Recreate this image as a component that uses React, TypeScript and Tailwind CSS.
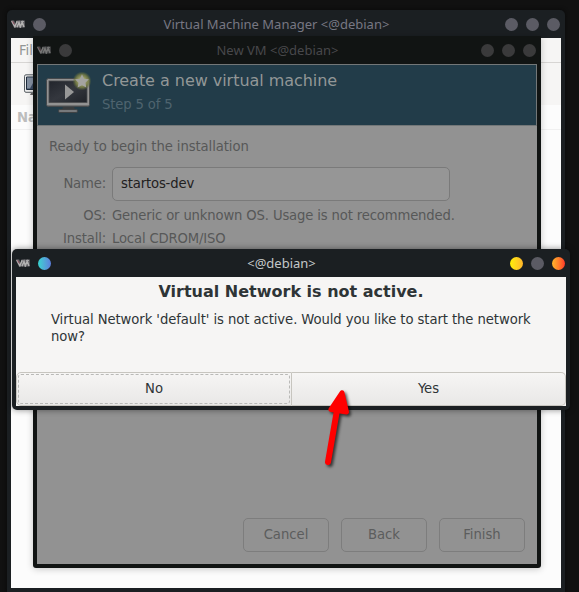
import type { ReactNode } from 'react';

const ui = "font-['DejaVu_Sans_Condensed','DejaVu_Sans',sans-serif] [font-stretch:condensed]";

function Logo({ dim = false }: { dim?: boolean }) {
  return (
    <svg width="14" height="8" viewBox="0 0 14 8" className={dim ? 'opacity-50' : 'opacity-80'}>
      <path d="M0 .5h3.2l1.2 3.8L5.5.5h8.3v7H3L0 1.6z" fill="#77757a" />
      <path d="M.8 1L3.9 6.8 6.1 1.3M6 7.3L8 2.4l1.3 4.4 1.9-4.6L13 6.9" fill="none" stroke="#dad8d7" strokeWidth="1.4" />
      <path d="M1.6 1.4l1.8 3" stroke="#a9485e" strokeWidth=".9" />
      <path d="M6.4 2.2h1M10 1.4h3M8.6 7h1.6" stroke="#cfcfcf" />
    </svg>
  );
}

function TitleBar({ title, dots, left, text, dim }: { title: string; dots: string[]; left: string; text: string; dim?: boolean }) {
  return (
    <div className="relative flex h-7 items-center">
      <Logo dim={dim} />
      <i className={`ml-[8px] size-[13px] rounded-full ${left}`} />
      <span className={`absolute left-0 right-[18px] top-[5px] text-center font-['Noto_Sans',sans-serif] text-[13px] leading-[18px] ${text}`}>{title}</span>
      <div className="ml-auto flex gap-2">
        {dots.map((d, i) => (
          <i key={i} className={`size-[13px] rounded-full ${d}`} />
        ))}
      </div>
    </div>
  );
}

function Monitor() {
  return (
    <svg width="46" height="43" viewBox="0 0 46 43" className="shrink-0">
      <defs>
        <linearGradient id="screen" x1="0" y1="0" x2="1" y2="1">
          <stop stopColor="#22252c" />
          <stop offset=".5" stopColor="#34373e" />
          <stop offset="1" stopColor="#202329" />
        </linearGradient>
        <radialGradient id="glow">
          <stop offset=".35" stopColor="#a0a46b" />
          <stop offset=".7" stopColor="#747b45" stopOpacity=".85" />
          <stop offset="1" stopColor="#5d6c3d" stopOpacity="0" />
        </radialGradient>
      </defs>
      <path d="M17 35h11l1 4H16z" fill="#393c3e" />
      <rect x="12.5" y="38.5" width="19" height="3" rx="1.3" fill="#77797b" stroke="#3f4244" />
      <rect x=".5" y="7.5" width="43" height="28" rx="2" fill="#929292" stroke="#45494c" />
      <rect x="3" y="10" width="38" height="21.5" fill="url(#screen)" stroke="#4a4b4e" strokeWidth=".8" />
      <path d="M2 34.5h40" stroke="#717171" />
      <path d="M19 13.5v15l9-7.5z" fill="#989898" />
      <circle cx="36" cy="10" r="9.5" fill="url(#glow)" />
      <path d="M36 3.3l2.1 4.4 4.8.6-3.5 3.4.9 4.9-4.3-2.4-4.4 2.4.9-4.9L29 8.3l4.9-.6z" fill="#a4a4a0" />
    </svg>
  );
}

function Field({ label, children, className, labelClass = '' }: { label: string; children: ReactNode; className: string; labelClass?: string }) {
  return (
    <div className={`flex items-center tracking-[-0.145px] ${className}`}>
      <span className={`w-[69px] text-right ${labelClass}`}>{label}</span>
      {children}
    </div>
  );
}

function Arrow() {
  return (
    <svg width="40" height="90" viewBox="0 0 40 90" className="absolute left-[319px] top-[384px]">
      <g style={{ filter: 'drop-shadow(2px 2px 1.5px rgba(0,0,0,.65))' }} stroke="#f00" strokeLinecap="round" strokeLinejoin="round">
        <path d="M9 78L17.5 29" strokeWidth="6" />
        <path d="M23 8.8L12 25.5 27.5 28z" fill="#f00" strokeWidth="5" />
      </g>
    </svg>
  );
}

export default function App() {
  const grey = 'bg-[#5b5b64]';
  const dim = 'bg-[#3a3a3b]';
  return (
    <main className={`relative h-[592px] w-[579px] overflow-hidden bg-[#111] text-[14.67px] leading-[17px] ${ui}`}>
      <section className="absolute left-[7px] top-[10px] h-[582px] w-[558px] rounded-t-[5px] bg-[#1b1f22] px-1 shadow-[0_0_4px_#080808]">
        <div className="pr-[1px]"><TitleBar title="Virtual Machine Manager <@debian>" left={grey} dots={[grey, grey, grey]} text="text-[#777783]" /></div>
        <div className="h-[550px] bg-[#fcfcfc]">
          <div className="h-[25px] border-b border-[#d7d5d3] bg-[#f6f5f4] pl-2 pt-[3px] text-[#929595]">File</div>
          <div className="h-[42px] bg-[#f6f5f4] pl-3 pt-[11px]">
            <svg width="24" height="23" viewBox="0 0 24 23">
              <rect x="1.5" y=".8" width="26" height="17.5" rx="1.5" fill="#eee" stroke="#555b60" />
              <path d="M3.5 3h24v12.5h-24z" fill="#3a4a62" stroke="#202c3c" />
              <path d="M4 3.5h9L7 14.5H4z" fill="#8591a2" />
              <path d="M8 19h17v2H7z" fill="#666" />
            </svg>
          </div>
          <div className="h-[25px] border-b border-[#f0f0f0] pl-[6px] pt-[3px] font-bold text-[#bdbdbd]">Name</div>
        </div>
      </section>

      <section className="absolute left-[33px] top-[36px] h-[532px] w-[508px] rounded-b-[3px] bg-[#111413] px-1 shadow-[0_1px_7px_rgba(0,0,0,.22)]">
        <div className="pr-[1px]"><TitleBar title="New VM <@debian>" left={dim} dots={[dim, dim, dim]} text="text-[#48484b]" dim /></div>
        <div className="flex h-[500px] flex-col bg-[#929292]">
          <header className="flex h-[62px] border border-[#737778] bg-[#223c49] pl-[8px] pt-[6px] font-['DejaVu_Sans',sans-serif] [font-stretch:normal]">
            <Monitor />
            <div className="ml-[10px]">
              <h1 className="text-[16px] leading-[19px] tracking-[-0.04px] text-[#929797]">Create a new virtual machine</h1>
              <p className={`mt-[5px] tracking-[-0.14px] text-[#4f646f] ${ui}`}>Step 5 of 5</p>
            </div>
          </header>
          <div className="text-[#575858]">
            <p className="ml-3 mt-[11px] tracking-[-0.08px]">Ready to begin the installation</p>
            <Field label="Name:" className="mt-[13px] h-[34px]" labelClass="pb-[3px]">
              <div className="ml-[6px] flex h-[34px] w-[338px] items-center rounded-[5px] border border-[#7a7a7a] bg-[#969696] pl-2 pb-[3px] text-[#1f2020]">startos-dev</div>
            </Field>
            <Field label="OS:" className="mt-[5px]"><span className="ml-[6px]">Generic or unknown OS. Usage is not recommended.</span></Field>
            <Field label="Install:" className="mt-[6px]"><span className="ml-[6px]">Local CDROM/ISO</span></Field>
          </div>
          <div className="mb-3 mr-3 mt-auto flex justify-end gap-3">
            {['Cancel', 'Back', 'Finish'].map((s) => (
              <button key={s} className="h-[34px] w-[86px] rounded-[5px] border border-[#7d7d7d] pb-[4px] text-[#5c5d5d]">{s}</button>
            ))}
          </div>
        </div>
      </section>

      <section className="absolute left-[12px] top-[249px] h-[161px] w-[558px] rounded-[5px] bg-[#1b1f22] px-1 shadow-[0_0_6px_rgba(0,0,0,.45)]">
        <div className="mr-px h-7">
          <TitleBar title="<@debian>" left="bg-linear-to-r from-[#35d4cf] to-[#5c7ddd]" dots={['bg-linear-to-r from-[#ffef00] to-[#ffb529]', grey, 'bg-linear-to-r from-[#ffb52b] to-[#ff3429]']} text="text-[#c4c8c9]" />
        </div>
        <div className="flex h-[129px] flex-col bg-[#f6f5f4] text-[#2e3436]">
          <h2 className="mt-[5px] text-center font-['DejaVu_Sans',sans-serif] text-[16px] font-bold leading-[19px] [font-stretch:normal]">Virtual Network is not active.</h2>
          <p className="ml-[35px] mt-[9px] w-[490px] tracking-[-0.07px]">Virtual Network 'default' is not active. Would you like to start the network<br />now?</p>
          <div className="mt-auto flex h-[34px]">
            <button className="w-[276px] rounded-l-[5px] border border-[#c7c5bf] bg-linear-to-b from-[#f6f5f4] to-[#e9e8e7] p-px">
              <span className="flex h-[30px] items-center justify-center rounded-[3px] border border-dashed border-[#b9b9b7] pb-[3px]">No</span>
            </button>
            <button className="flex-1 rounded-r-[5px] border border-l-0 border-[#c7c5bf] bg-linear-to-b from-[#f6f5f4] to-[#e9e8e7] pb-[3px]">Yes</button>
          </div>
        </div>
      </section>
      <Arrow />
    </main>
  );
}
